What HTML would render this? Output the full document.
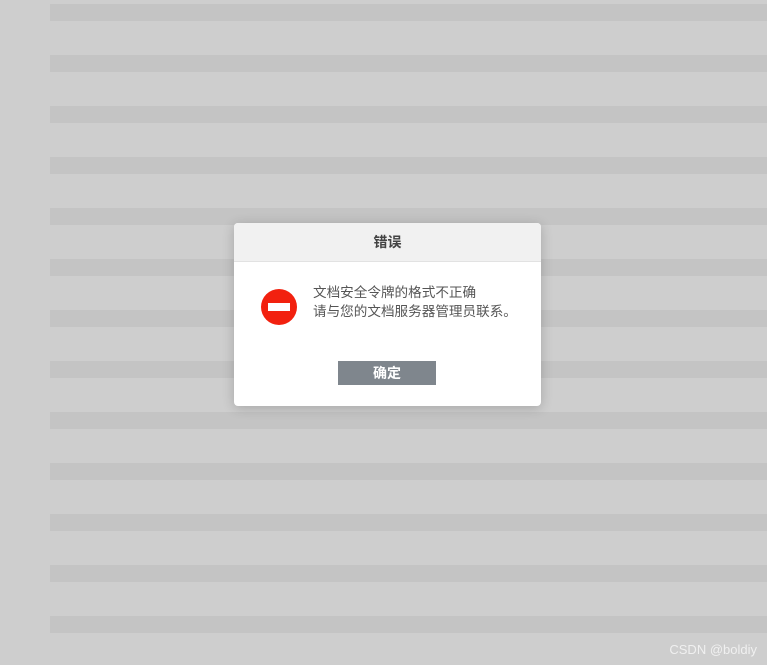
<!DOCTYPE html><html><head><meta charset="utf-8"><style>
body{margin:0;width:767px;height:665px;background:#cecece;position:relative;overflow:hidden;font-family:"Liberation Sans","Noto Sans CJK SC",sans-serif}
.s{position:absolute;left:50px;width:717px;height:17px;background:#c4c4c4}
.d{position:absolute;left:234px;top:223px;width:307px;height:183px;background:#fff;border-radius:4px;box-shadow:0 2px 12px rgba(0,0,0,.2);overflow:hidden}
.h{height:38px;background:#f1f1f1;border-bottom:1px solid #e2e2e2;text-align:center;line-height:38px;font-size:14px;font-weight:bold;color:#444}
.t{position:absolute;left:79px;top:60px;font-size:13.6px;line-height:19px;color:#555;white-space:nowrap}
.i{position:absolute;left:27px;top:66px;width:36px;height:36px;border-radius:50%;background:#f2210f}
.i:after{content:"";position:absolute;left:7px;top:14px;width:22px;height:8px;background:#fff}
.b{position:absolute;left:104px;top:138px;width:98px;height:24px;background:#7f868d;color:#fff;font-weight:bold;font-size:14px;text-align:center;line-height:24px}
.w{position:absolute;right:10px;bottom:8px;font-size:13px;color:#f0f0f0}
</style></head><body>
<div class="s" style="top:4px"></div><div class="s" style="top:55px"></div><div class="s" style="top:106px"></div><div class="s" style="top:157px"></div><div class="s" style="top:208px"></div><div class="s" style="top:259px"></div><div class="s" style="top:310px"></div><div class="s" style="top:361px"></div><div class="s" style="top:412px"></div><div class="s" style="top:463px"></div><div class="s" style="top:514px"></div><div class="s" style="top:565px"></div><div class="s" style="top:616px"></div>
<div class="d"><div class="h">错误</div><div class="i"></div><div class="t">文档安全令牌的格式不正确<br>请与您的文档服务器管理员联系。</div><div class="b">确定</div></div>
<div class="w">CSDN @boldiy</div>
</body></html>
